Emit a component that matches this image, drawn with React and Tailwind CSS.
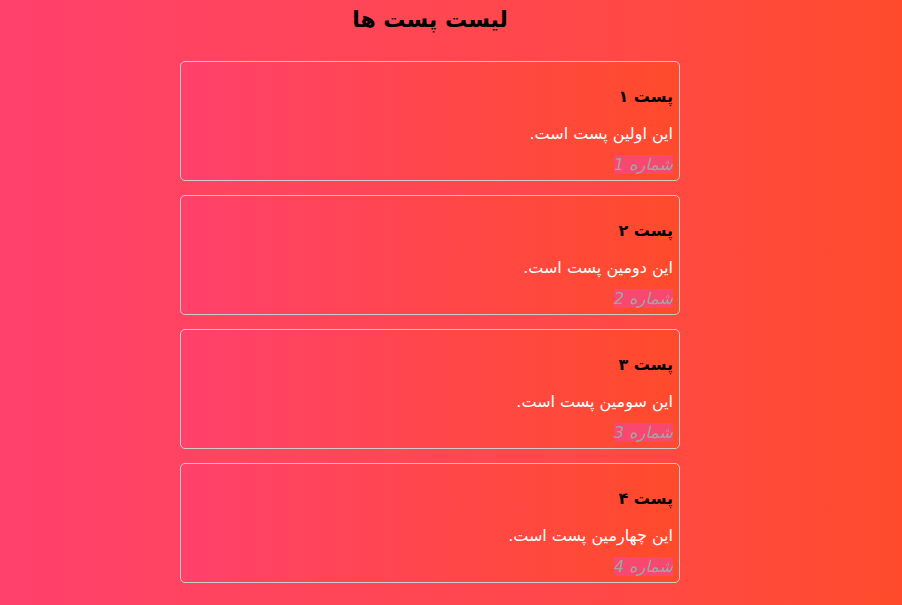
export default function App() {
  const posts = [
    { t: "پست ۱", b: "این اولین پست است.", n: 1 },
    { t: "پست ۲", b: "این دومین پست است.", n: 2 },
    { t: "پست ۳", b: "این سومین پست است.", n: 3 },
    { t: "پست ۴", b: "این چهارمین پست است.", n: 4 },
  ];
  return (
    <div
      className="w-[902px] h-[605px] overflow-hidden bg-gradient-to-r from-[#ff416c] to-[#ff4b2b]"
      style={{ fontFamily: '"DejaVu Sans", sans-serif' }}
    >
      <div dir="rtl" className="w-[860px] flex flex-col items-center">
        <h1 className="text-[22px] font-bold leading-[40px] h-[40px] text-black">لیست پست ها</h1>
        <div className="mt-[21px] flex flex-col gap-[14px]">
          {posts.map((p) => (
            <div
              key={p.n}
              className="w-[500px] h-[120px] border border-[#cccccc] rounded-[5px] px-[6px] flex flex-col items-start"
              style={{ backgroundImage: "linear-gradient(to right, #ff416c, #ff4b2b)" }}
            >
              <h3 className="mt-[24px] text-[16px] font-bold leading-[22px] text-black">{p.t}</h3>
              <p className="mt-[16px] text-[16px] leading-[20px] text-white">{p.b}</p>
              <div className="mt-[11px] text-[16px] leading-[20px]">
                <span className="italic text-[#a3a3a3] bg-[#f8486f]">شماره {p.n}</span>
              </div>
            </div>
          ))}
        </div>
      </div>
    </div>
  );
}
